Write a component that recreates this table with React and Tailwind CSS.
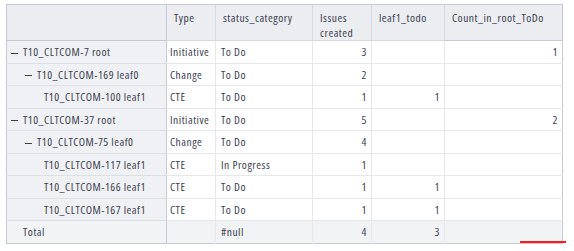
import React from 'react';

const rows = [
  { name: 'T10_CLTCOM-7 root', level: 0, toggle: true, type: 'Initiative', status: 'To Do', issues: '3', leaf: '', count: '1' },
  { name: 'T10_CLTCOM-169 leaf0', level: 1, toggle: true, type: 'Change', status: 'To Do', issues: '2', leaf: '', count: '' },
  { name: 'T10_CLTCOM-100 leaf1', level: 2, toggle: false, type: 'CTE', status: 'To Do', issues: '1', leaf: '1', count: '' },
  { name: 'T10_CLTCOM-37 root', level: 0, toggle: true, type: 'Initiative', status: 'To Do', issues: '5', leaf: '', count: '2' },
  { name: 'T10_CLTCOM-75 leaf0', level: 1, toggle: true, type: 'Change', status: 'To Do', issues: '4', leaf: '', count: '' },
  { name: 'T10_CLTCOM-117 leaf1', level: 2, toggle: false, type: 'CTE', status: 'In Progress', issues: '1', leaf: '', count: '' },
  { name: 'T10_CLTCOM-166 leaf1', level: 2, toggle: false, type: 'CTE', status: 'To Do', issues: '1', leaf: '1', count: '' },
  { name: 'T10_CLTCOM-167 leaf1', level: 2, toggle: false, type: 'CTE', status: 'To Do', issues: '1', leaf: '1', count: '' },
];

const indent = ['pl-[3px]', 'pl-[17px]', 'pl-[37px]'];

export default function App() {
  return (
    <div className="w-[574px] h-[251px] bg-white pl-[6px] pt-[4px] font-['Open_Sans',sans-serif] [font-stretch:87.5%] tracking-[0.5px] text-[11.5px] text-[#3c4150] relative">
      <table className="border-collapse table-fixed w-[556px] border border-[#c5c9d1]">
        <colgroup>
          <col className="w-[160px]" />
          <col className="w-[49px]" />
          <col className="w-[97px]" />
          <col className="w-[59px]" />
          <col className="w-[73px]" />
          <col className="w-[118px]" />
        </colgroup>
        <thead>
          <tr className="h-[36px] bg-[#ebedf0] align-top">
            <th className="border-r border-b border-[#c5c9d1]"></th>
            <th className="border-r border-b border-[#d5d8de] text-left font-normal px-[7px] pt-[5px] leading-[15px]">Type</th>
            <th className="border-r border-b border-[#d5d8de] text-left font-normal px-[7px] pt-[5px] leading-[15px]">status_category</th>
            <th className="border-r border-b border-[#d5d8de] text-left font-normal px-[7px] pt-[5px] leading-[15px]">Issues created</th>
            <th className="border-r border-b border-[#d5d8de] text-left font-normal px-[7px] pt-[5px] leading-[15px]">leaf1_todo</th>
            <th className="border-b border-[#c5c9d1] text-left font-normal px-[7px] pt-[5px] leading-[15px]">Count_in_root_ToDo</th>
          </tr>
        </thead>
        <tbody>
          {rows.map((r) => (
            <tr key={r.name} className="h-[22.5px]">
              <td className={`bg-[#f0f1f4] border-r border-b border-r-[#c5c9d1] border-b-[#dcdfe4] whitespace-nowrap ${indent[r.level]}`}>
                {r.toggle && <span className="inline-block w-[7px] h-px bg-[#3c4150] align-middle mr-[5px] ml-px" />}
                {r.name}
              </td>
              <td className="border-r border-b border-[#e6e8ec] px-[3px] whitespace-nowrap">{r.type}</td>
              <td className="border-r border-b border-[#e6e8ec] px-[5px]">{r.status}</td>
              <td className="border-r border-b border-[#e6e8ec] px-[4px] text-right">{r.issues}</td>
              <td className="border-r border-b border-[#e6e8ec] px-[4px] text-right">{r.leaf}</td>
              <td className="border-b border-[#e6e8ec] px-[4px] text-right">{r.count}</td>
            </tr>
          ))}
          <tr className="h-[23px] bg-[#f2f3f5]">
            <td className="border-r border-[#c5c9d1] pl-[16px]">Total</td>
            <td className="border-r border-[#e6e8ec]"></td>
            <td className="border-r border-[#e6e8ec] px-[5px]">#null</td>
            <td className="border-r border-[#e6e8ec] px-[4px] text-right">4</td>
            <td className="border-r border-[#e6e8ec] px-[4px] text-right">3</td>
            <td></td>
          </tr>
        </tbody>
      </table>
      <div className="absolute left-[520px] top-[241px] w-[46px] h-[2px] bg-[#ff1a1a]" />
    </div>
  );
}
